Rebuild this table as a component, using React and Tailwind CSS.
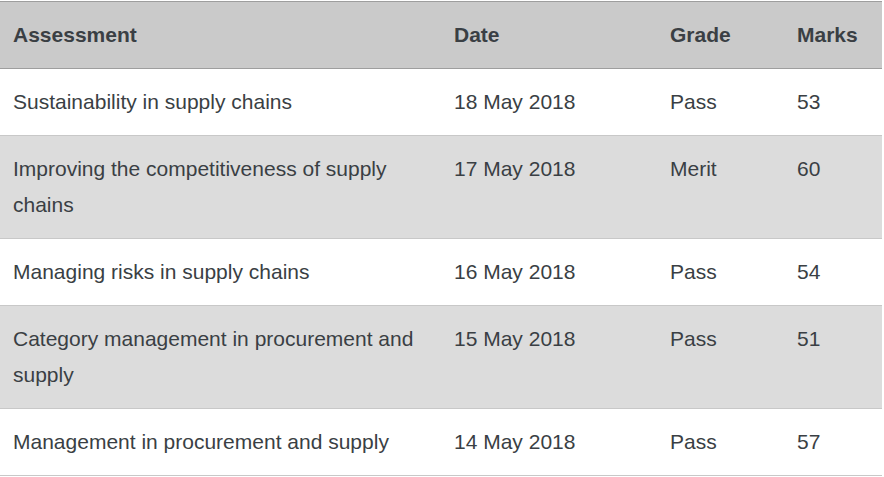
import React from "react";

const rows = [
  { name: "Sustainability in supply chains", date: "18 May 2018", grade: "Pass", marks: 53 },
  { name: "Improving the competitiveness of supply chains", date: "17 May 2018", grade: "Merit", marks: 60 },
  { name: "Managing risks in supply chains", date: "16 May 2018", grade: "Pass", marks: 54 },
  { name: "Category management in procurement and supply", date: "15 May 2018", grade: "Pass", marks: 51 },
  { name: "Management in procurement and supply", date: "14 May 2018", grade: "Pass", marks: 57 },
];

const App = () => {
  return (
    <div className="bg-white pt-px w-[884px] h-[477px] overflow-hidden font-['Liberation_Sans',Arial,sans-serif]">
      <table className="w-[882px] table-fixed border-collapse text-[21px] leading-[36px] text-[#3a3f44]">
        <colgroup>
          <col className="w-[442px]" />
          <col className="w-[216px]" />
          <col className="w-[127px]" />
          <col className="w-[97px]" />
        </colgroup>
        <thead>
          <tr className="bg-[#cacaca] border-t border-b border-[#9e9e9e]">
            <th className="text-left font-bold pl-[13px] pr-3 py-[15px]">Assessment</th>
            <th className="text-left font-bold pl-3 pr-3 py-[15px]">Date</th>
            <th className="text-left font-bold pl-3 pr-3 py-[15px]">Grade</th>
            <th className="text-left font-bold pl-3 pr-3 py-[15px]">Marks</th>
          </tr>
        </thead>
        <tbody>
          {rows.map((r, i) => (
            <tr
              key={r.name}
              className={`border-b border-[#c8c8c8] ${i % 2 === 1 ? "bg-[#dcdcdc]" : "bg-white"}`}
            >
              <td className="align-top pl-[13px] pr-3 py-[15px]">{r.name}</td>
              <td className="align-top pl-3 pr-3 py-[15px]">{r.date}</td>
              <td className="align-top pl-3 pr-3 py-[15px]">{r.grade}</td>
              <td className="align-top pl-3 pr-3 py-[15px]">{r.marks}</td>
            </tr>
          ))}
        </tbody>
      </table>
    </div>
  );
};

export default App;
